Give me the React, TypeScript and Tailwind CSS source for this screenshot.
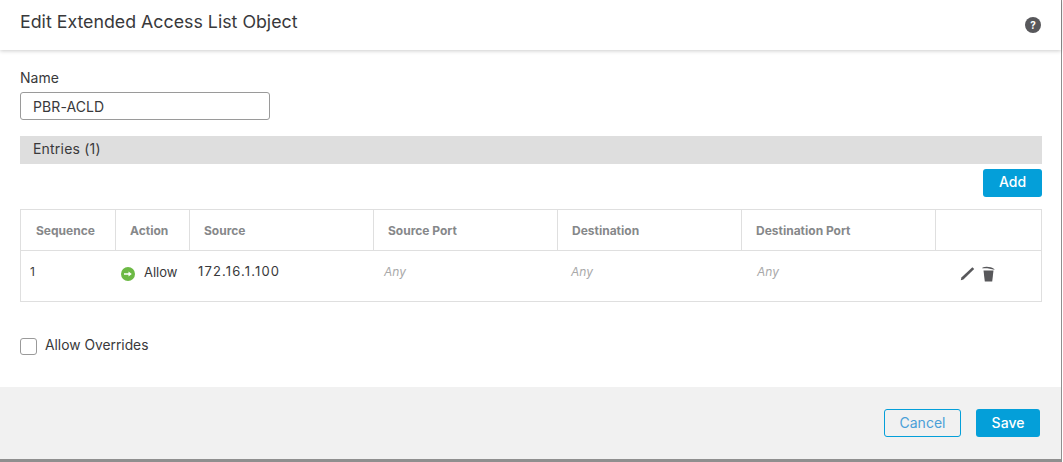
const columns = [
  { label: "Sequence", width: "w-[95px]", pad: "pl-[15px]" },
  { label: "Action", width: "w-[74px]", pad: "pl-[14px]" },
  { label: "Source", width: "w-[184px]", pad: "pl-[14px]" },
  { label: "Source Port", width: "w-[184px]", pad: "pl-[14px]" },
  { label: "Destination", width: "w-[184px]", pad: "pl-[14px]" },
  { label: "Destination Port", width: "w-[194px]", pad: "pl-[14px]" },
];

const AnyCell = ({ width, left }: { width: string; left: string }) => (
  <div className={`${width} ${left} shrink-0 pt-[13px] text-[12px] italic text-[#a9a9a9]`}>Any</div>
);

export default function App() {
  return (
    <div className="h-[462px] w-[1063px] overflow-hidden bg-white font-['Inter','Noto_Sans',sans-serif] text-[#39393b]">
      <div className="flex h-[459px] w-[1062px] flex-col border-r border-[#8f8f8f]">
        <header className="z-10 flex h-[50px] shrink-0 items-start justify-between bg-white pl-5 pr-[20px] shadow-[0_1px_4px_rgba(0,0,0,0.2)]">
          <h1 className="mt-[11px] text-[17.8px] leading-[22px] font-normal">Edit Extended Access List Object</h1>
          <div className="mt-[17px] flex h-4 w-4 items-center justify-center rounded-full bg-[#58585b] text-[10px] leading-none font-bold text-white">
            ?
          </div>
        </header>

        <main className="flex-1 px-5 pt-[19px]">
          <label className="block text-[14px] leading-[18px]">Name</label>
          <input
            readOnly
            value="PBR-ACLD"
            className="mt-[5px] block h-[28px] w-[250px] rounded-[3px] border border-[#9a9a9a] px-3 text-[14px] tracking-[0.1px] text-[#39393b] outline-none"
          />

          <div className="mt-4 h-[28px] w-[1022px] bg-[#dedede] pl-[13px] text-[14px] leading-[26px] tracking-[0.2px]">Entries (1)</div>

          <div className="mt-[5px] flex w-[1022px] justify-end">
            <button className="h-[28px] w-[59px] rounded-[3px] bg-[#049fd9] pb-[4px] text-[14px] font-medium text-white">Add</button>
          </div>

          <div className="mt-3 w-[1022px] border border-[#dfdfdf]">
            <div className="flex h-[41px] border-b border-[#dfdfdf]">
              {columns.map((col) => (
                <div
                  key={col.label}
                  className={`${col.width} ${col.pad} shrink-0 border-r border-[#dfdfdf] pt-[13px] text-[12px] leading-[15px] font-bold text-[#86888a]`}
                >
                  {col.label}
                </div>
              ))}
            </div>
            <div className="flex h-[50px] leading-[15px]">
              <div className="w-[95px] shrink-0 pt-[13px] pl-[9px] text-[12px]">1</div>
              <div className="flex w-[74px] shrink-0 items-start pt-[14px] pl-[5px] text-[13px]">
                <svg viewBox="0 0 14 14" className="mt-[2px] h-[14px] w-[14px]">
                  <circle cx="7" cy="7" r="7" fill="#6cb944" />
                  <path d="M3 6.2h4.5V4.4L10.8 7 7.5 9.6V7.8H3z" fill="#fff" />
                </svg>
                <span className="ml-[9px]">Allow</span>
              </div>
              <div className="w-[184px] shrink-0 pt-[13px] pl-[8px] text-[13px] tracking-[1.15px]">172.16.1.100</div>
              <AnyCell width="w-[184px]" left="pl-[10px]" />
              <AnyCell width="w-[184px]" left="pl-[13px]" />
              <AnyCell width="w-[194px]" left="pl-[15px]" />
              <div className="flex flex-1 items-start pt-[15px] pl-[24px]">
                <svg viewBox="0 0 15 15" className="h-[15px] w-[15px]" fill="#58585b">
                  <path d="M0.8 14.2l0.6-2.8L12.4 1.2l1.8 1.8L3.4 13.6z" />
                </svg>
                <svg viewBox="0 0 13 16" className="ml-[7px] h-[16px] w-[13px]" fill="#58585b">
                  <path d="M1.5 4.5h10L10.2 15.5H2.8z" />
                  <path d="M0.5 1.6C4 .2 9 .8 12.5 3.2l-.2.6C9 2.6 4 2 .5 2.4z" />
                </svg>
              </div>
            </div>
          </div>

          <label className="mt-[34px] flex items-start text-[13.8px] leading-[18px]">
            <span className="mt-[2px] h-[17px] w-[17px] rounded-[3px] border border-[#9a9a9a] bg-white" />
            <span className="ml-2">Allow Overrides</span>
          </label>
        </main>

        <footer className="flex h-[72px] shrink-0 items-start justify-end gap-[15px] bg-[#f1f1f1] pt-[22px] pr-[21px]">
          <button className="h-[28px] w-[77px] rounded-[3px] border border-[#049fd9] pb-[2px] text-[14px] text-[#4a9fd8]">Cancel</button>
          <button className="h-[28px] w-[64px] rounded-[3px] bg-[#049fd9] pb-[2px] text-[14px] font-medium text-white">Save</button>
        </footer>
      </div>
      <div className="h-[3px] w-[1062px] bg-[#8f8f8f]" />
    </div>
  );
}
